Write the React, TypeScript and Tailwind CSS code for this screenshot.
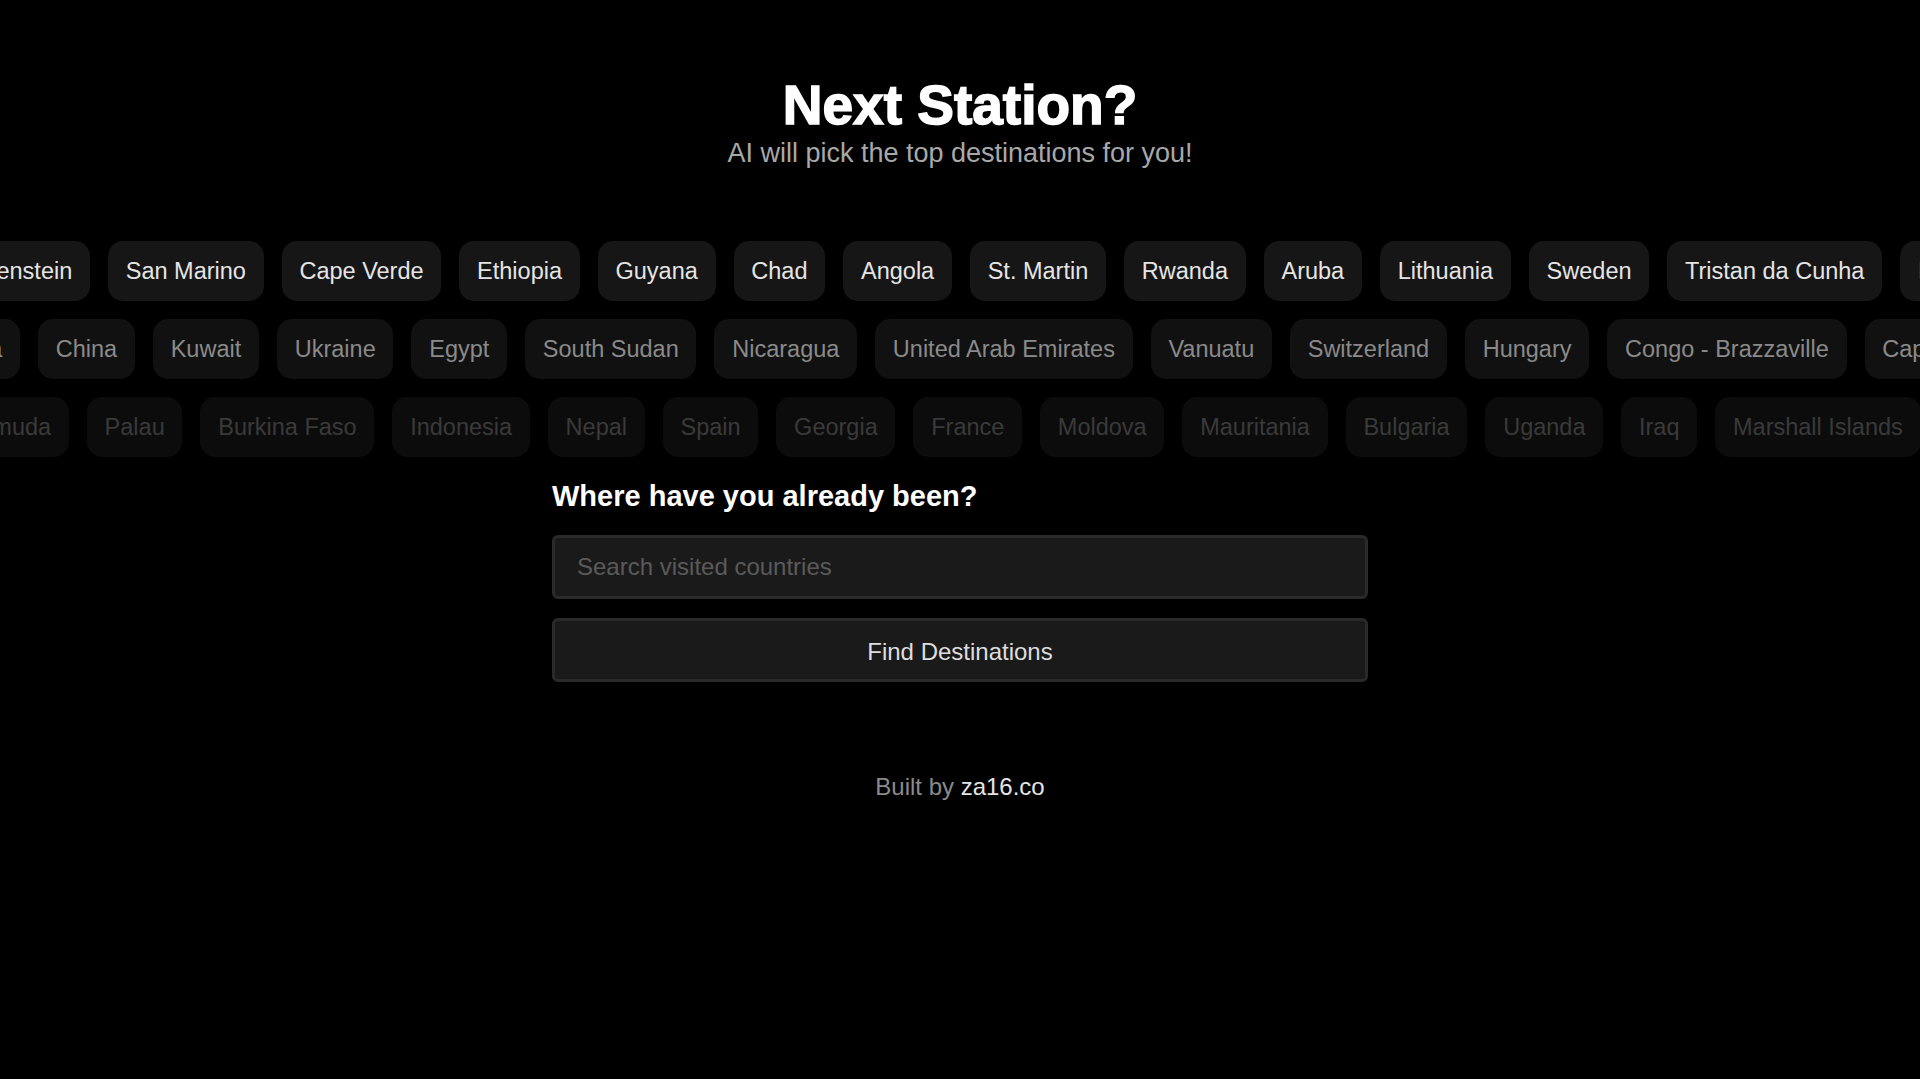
const rows = [
  {
    offset: "-ml-[84px]",
    pill: "bg-[#161616] text-[#e5e5e5]",
    items: [
      "Liechtenstein",
      "San Marino",
      "Cape Verde",
      "Ethiopia",
      "Guyana",
      "Chad",
      "Angola",
      "St. Martin",
      "Rwanda",
      "Aruba",
      "Lithuania",
      "Sweden",
      "Tristan da Cunha",
      "Iceland",
      "Peru",
    ],
  },
  {
    offset: "-ml-[103px]",
    pill: "bg-[#111111] text-[#8a8a8a]",
    items: [
      "Panama",
      "China",
      "Kuwait",
      "Ukraine",
      "Egypt",
      "South Sudan",
      "Nicaragua",
      "United Arab Emirates",
      "Vanuatu",
      "Switzerland",
      "Hungary",
      "Congo - Brazzaville",
      "Cape Verde",
      "Japan",
    ],
  },
  {
    offset: "-ml-[62px]",
    pill: "bg-[#0c0c0c] text-[#3a3a3a]",
    items: [
      "Bermuda",
      "Palau",
      "Burkina Faso",
      "Indonesia",
      "Nepal",
      "Spain",
      "Georgia",
      "France",
      "Moldova",
      "Mauritania",
      "Bulgaria",
      "Uganda",
      "Iraq",
      "Marshall Islands",
      "Chile",
    ],
  },
];

function CountryRow({ items, offset, pill }: { items: string[]; offset: string; pill: string }) {
  return (
    <div className="w-full overflow-hidden">
      <div className={`flex gap-[18px] ${offset}`}>
        {items.map((name) => (
          <span
            key={name}
            className={`flex h-[60px] shrink-0 items-center whitespace-nowrap rounded-[15px] px-[17.75px] text-[23.5px] leading-[36px] ${pill}`}
          >
            {name}
          </span>
        ))}
      </div>
    </div>
  );
}

export default function App() {
  return (
    <div className="min-h-[1079px] w-full overflow-hidden bg-black font-['Liberation_Sans',Arial,sans-serif] text-white">
      <header className="flex flex-col items-center pt-[78px]">
        <h1 className="text-[55px] font-bold leading-none text-white [-webkit-text-stroke:1.5px_white]">Next Station?</h1>
        <p className="text-[27px] leading-[40px] text-[#a8a8a8]">AI will pick the top destinations for you!</p>
      </header>

      <section className="mt-[68px] flex flex-col gap-[18px]">
        {rows.map((row, i) => (
          <CountryRow key={i} items={row.items} offset={row.offset} pill={row.pill} />
        ))}
      </section>

      <main className="mx-auto mt-[17px] flex w-[816px] flex-col">
        <h2 className="text-[29px] font-bold leading-[45px] text-white">Where have you already been?</h2>
        <input
          type="text"
          placeholder="Search visited countries"
          className="mt-4 h-[64px] w-full rounded-[6px] border-[3px] border-[#2a2a2a] bg-[#1a1a1a] px-[22px] text-[24px] text-[#e5e5e5] outline-none placeholder:text-[#5a5a5a]"
        />
        <button className="mt-[19px] h-[64px] w-full rounded-[6px] border-[3px] border-[#2a2a2a] bg-[#1a1a1a] pt-[4px] text-[24px] text-[#dedede]">
          Find Destinations
        </button>
      </main>

      <footer className="mt-[87px] text-center text-[24px] leading-[36px] text-[#8a8a8a]">
        Built by <a className="text-[#e5e5e5]">za16.co</a>
      </footer>
    </div>
  );
}
